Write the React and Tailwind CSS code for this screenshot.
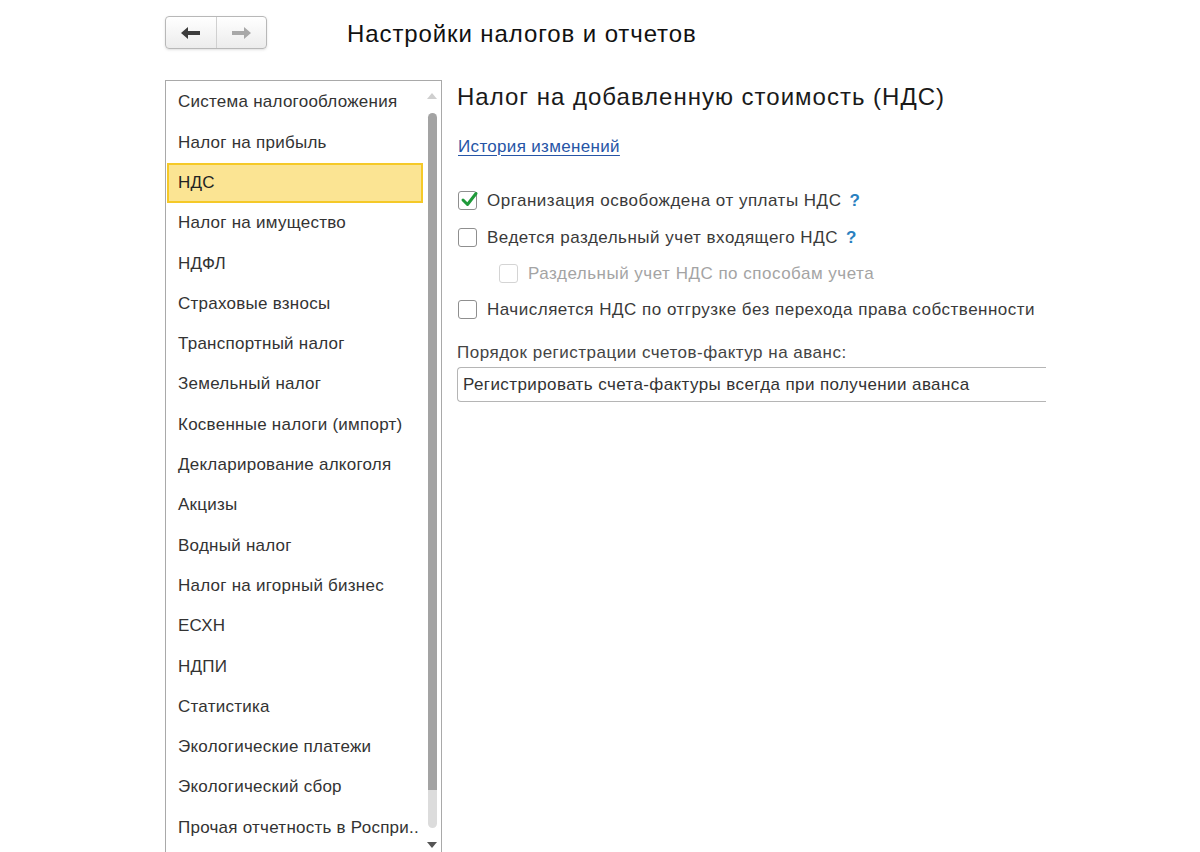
import React from "react";

const items = [
  "Система налогообложения",
  "Налог на прибыль",
  "НДС",
  "Налог на имущество",
  "НДФЛ",
  "Страховые взносы",
  "Транспортный налог",
  "Земельный налог",
  "Косвенные налоги (импорт)",
  "Декларирование алкоголя",
  "Акцизы",
  "Водный налог",
  "Налог на игорный бизнес",
  "ЕСХН",
  "НДПИ",
  "Статистика",
  "Экологические платежи",
  "Экологический сбор",
  "Прочая отчетность в Роспри..",
];

function Check({ checked, disabled }) {
  return (
    <span
      className={
        "relative inline-block w-[19px] h-[19px] rounded-[3px] border bg-white shrink-0 " +
        (disabled ? "border-[#d4d4d4]" : "border-[#8f8f8f]")
      }
    >
      {checked && (
        <svg className="absolute left-[1px] top-[-2px]" width="19" height="19" viewBox="0 0 19 19">
          <path d="M3 10 L7.5 14.5 L16 3.5" fill="none" stroke="#1f9a3a" strokeWidth="3" strokeLinecap="round" strokeLinejoin="round" />
        </svg>
      )}
    </span>
  );
}

function Row({ checked, disabled, help, children, indent, h }) {
  return (
    <div className={"flex items-center " + (h || "h-[37px]") + " " + (indent ? "pl-[42px]" : "pl-px")}>
      <Check checked={checked} disabled={disabled} />
      <span className={"ml-[10px] text-[17px] tracking-[0.5px] " + (disabled ? "text-[#a4a4a4]" : "text-[#3a3a3a]")}>{children}</span>
      {help && <span className="ml-[8px] text-[17px] font-bold text-[#2a7fc0]">?</span>}
    </div>
  );
}

export default function App() {
  return (
    <div className="w-[1200px] h-[852px] bg-white overflow-hidden" style={{ fontFamily: '"Liberation Sans", Arial, sans-serif' }}>
      <div className="flex items-center pt-[16px] pl-[165px]">
        <div className="flex h-[33px] w-[102px] rounded-[4px] border border-[#b8b8b8] bg-gradient-to-b from-white to-[#ececec] shadow-sm">
          <div className="flex-1 flex items-center justify-center border-r border-[#d0d0d0]">
            <svg width="22" height="14" viewBox="0 0 22 14">
              <path d="M1 7 L8 1 L8 5 L20 5 L20 9 L8 9 L8 13 Z" fill="#3c3c3c" />
            </svg>
          </div>
          <div className="flex-1 flex items-center justify-center">
            <svg width="22" height="14" viewBox="0 0 22 14">
              <path d="M21 7 L14 1 L14 5 L2 5 L2 9 L14 9 L14 13 Z" fill="#a8a8a8" />
            </svg>
          </div>
        </div>
        <h1 className="ml-[80px] mt-[2px] text-[24px] tracking-[0.9px] text-[#111] leading-none">Настройки налогов и отчетов</h1>
      </div>

      <div className="flex mt-[31px] pl-[165px]">
        <div className="relative w-[277px] h-[790px] border border-[#a9a9a9] border-b-0 shrink-0">
          <div className="pt-[1px] pr-[18px] pl-[1px]">
            {items.map((t) => {
              const sel = t === "НДС";
              return (
                <div
                  key={t}
                  className={
                    "h-[40.3px] flex items-center text-[17px] tracking-[0.25px] whitespace-nowrap overflow-hidden " +
                    (sel ? "bg-[#fbe493] border-2 border-[#f5c928] pl-[9px] text-[#222]" : "pl-[11px] text-[#333]")
                  }
                >
                  {t}
                </div>
              );
            })}
          </div>
          <div className="absolute right-[3px] top-0 bottom-0 w-[12px] flex flex-col items-center">
            <svg className="mt-[11px]" width="10" height="7" viewBox="0 0 10 7">
              <path d="M0 7 L5 1 L10 7 Z" fill="#cfcfcf" />
            </svg>
            <div className="mt-[14px] w-[9px] h-[677px] rounded-t-full bg-[#a3a3a3]" />
            <div className="w-[9px] h-[38px] rounded-b-full bg-[#dcdcdc]" />
            <svg className="mt-[14px]" width="10" height="7" viewBox="0 0 10 7">
              <path d="M0 0 L10 0 L5 6 Z" fill="#555" />
            </svg>
          </div>
        </div>

        <div className="ml-[15px] flex-1">
          <h2 className="mt-[3px] text-[24px] tracking-[1px] text-[#1a1a1a] leading-[28px]">Налог на добавленную стоимость (НДС)</h2>
          <a className="block mt-[26px] ml-px text-[17px] tracking-[0.33px] text-[#2655a6] underline underline-offset-[3px] leading-[20px] w-fit">История изменений</a>
          <div className="mt-[25px]">
            <Row checked help>Организация освобождена от уплаты НДС</Row>
            <Row help>Ведется раздельный учет входящего НДС</Row>
            <Row disabled indent h="h-[35px]">Раздельный учет НДС по способам учета</Row>
            <Row>Начисляется НДС по отгрузке без перехода права собственности</Row>
          </div>
          <div className="mt-[15px] text-[17px] tracking-[0.5px] text-[#444] leading-[20px]">Порядок регистрации счетов-фактур на аванс:</div>
          <div className="mt-[4px] w-[589px] h-[35px] border border-r-0 border-[#b5b5b5] rounded-l-[4px] flex items-center pl-[5px] text-[17px] tracking-[0.4px] text-[#333]">
            Регистрировать счета-фактуры всегда при получении аванса
          </div>
        </div>
      </div>
    </div>
  );
}
